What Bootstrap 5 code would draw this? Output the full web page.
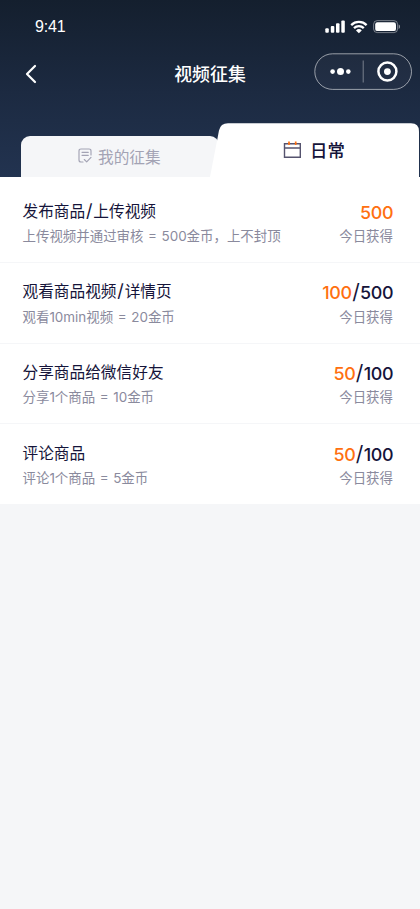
<!DOCTYPE html>
<html lang="zh-CN">
<head>
<meta charset="utf-8">
<meta name="viewport" content="width=device-width, initial-scale=1">
<title>视频征集</title>
<link href="https://cdn.jsdelivr.net/npm/bootstrap@5.3.0/dist/css/bootstrap.min.css" rel="stylesheet">
<style>
body{background:#f5f6f8;color:#15143a;font-family:Inter,"Noto Sans CJK SC",sans-serif;line-height:1}
.hero{height:177px;background:linear-gradient(#141f2e,#1c2a41 52%,#223350)}
.statusbar{height:52px;padding:1px 20px 0 35px}
.clock{font:400 16px/1 "Liberation Sans",Arial,sans-serif;letter-spacing:-.2px}
.titlebar{height:44px;display:grid;grid-template-columns:1fr auto 1fr;padding:0 8px}
.back{margin-left:16px}
.page-title{font-size:17.92px;font-weight:500;line-height:24px;padding-top:2px}
.capsule{width:98px;height:37px;margin-top:-5px}
.tabs{height:81px;padding-left:21px}
.tab-mine{width:198px;height:41px;background:#f5f6f8;border-radius:9px 9px 0 0;color:#a3a3b4;font-size:15.68px;padding:2px 0 0 57px;gap:6px}
.tab-daily{width:209px;height:54px;margin-left:-9px;color:#15143a;font-size:17.4px;font-weight:500;padding-left:73px;gap:8px}
.tab-daily>*{position:relative}
.tab-daily>span{padding-top:2px}
.tab-daily>.tab-shape{position:absolute;left:0;top:0}
.task{height:80px;padding:17px 27px 0 22.5px;border-bottom:1px solid #f5f6f8}
.task:first-child{height:86px;padding-top:23px}
.task:nth-child(2){height:81px;padding-top:17px}
.task:nth-child(2) .hint{margin-top:3px}
.task:last-child{border:0;padding-top:18px}
.task-title{font-size:15.68px;line-height:24px}
.slash{font-size:18px;line-height:1;padding:0 .8px}
.hint{font-size:13.44px;line-height:20px;color:#8a8a9d;margin-top:2px;white-space:nowrap;word-spacing:.8px}
.score{font-size:17.92px;font-weight:500;line-height:24px;padding-top:1px;margin-bottom:-1px;letter-spacing:-.3px;margin-right:-.3px}
.score-slash{font-size:21px;line-height:1;font-weight:400;padding:0 .6px 0 .3px}
.earned{color:#ff7010}
</style>
<script src="https://cdn.jsdelivr.net/npm/bootstrap@5.3.0/dist/js/bootstrap.bundle.min.js" defer></script>
</head>
<body>
<header class="hero text-white d-flex flex-column">
  <div class="statusbar d-flex align-items-center justify-content-between">
    <span class="clock">9:41</span>
    <svg width="76" height="16" viewBox="324 18 76 16" fill="#fff">
      <rect x="325.3" y="27.2" width="3.5" height="4.6" rx="1"/><rect x="330.8" y="25" width="3.5" height="6.8" rx="1"/><rect x="336" y="22.3" width="3.5" height="9.5" rx="1"/><rect x="341.3" y="19.6" width="3.5" height="12.2" rx="1"/>
      <g fill="none" stroke="#fff" stroke-width="2.3"><path d="M351.2 24.1a11 11 0 0 1 15.4 0M354 27.1a7 7 0 0 1 9.8 0"/></g>
      <path d="M356 29.5a4.2 4.2 0 0 1 5.8 0l-2.9 2.7z"/>
      <rect x="373.6" y="19.6" width="24" height="12" rx="3.7" fill="none" stroke="#fff" stroke-opacity=".42"/>
      <rect x="375.2" y="21.3" width="20.8" height="8.8" rx="2.2"/>
      <path d="M398.7 23.5q1.4.7 1.4 2.2t-1.4 2.2z" opacity=".5"/>
    </svg>
  </div>
  <div class="titlebar align-items-center">
    <svg class="back" width="14" height="20" viewBox="0 0 14 20" fill="none" stroke="#fff" stroke-width="2.2" stroke-linecap="round" stroke-linejoin="round"><path d="M11 2 3 10l8 8"/></svg>
    <h1 class="page-title mb-0">视频征集</h1>
    <svg class="capsule ms-auto" viewBox="0 0 98 37">
      <rect x=".8" y=".8" width="96.7" height="35.6" rx="17.8" fill="#fff" fill-opacity=".03" stroke="#fff" stroke-opacity=".55"/>
      <g fill="#fff"><circle cx="18.6" cy="18.6" r="2.3"/><circle cx="26.5" cy="18.6" r="3.5"/><circle cx="34.3" cy="18.6" r="2.3"/><circle cx="73.4" cy="18.6" r="3.4"/></g>
      <path d="M49.2 7.5v22" stroke="#fff" stroke-opacity=".4"/>
      <circle cx="73.4" cy="18.6" r="9" fill="none" stroke="#fff" stroke-width="2.5"/>
    </svg>
  </div>
  <nav class="tabs d-flex align-items-end">
    <div class="tab-mine d-flex align-items-center flex-shrink-0">
      <svg width="14" height="15" viewBox="0 0 14 15" fill="none" stroke="#a3a3b4" stroke-width="1.15" stroke-linecap="round" stroke-linejoin="round" class="mb-1"><path d="M13 7V3Q13 1 11 1H3Q1 1 1 3v9q0 2 2 2h2M4 4.3h6.3M4 7.3h6.3M6.3 11.5l2.4 2.3L13 9.3"/></svg>
      <span>我的征集</span>
    </div>
    <div class="tab-daily d-flex position-relative align-items-center flex-shrink-0 text-nowrap">
      <svg class="tab-shape" width="209" height="54" viewBox="0 0 209 54" fill="#fff"><path d="M0 54 9 7.5Q10.5.3 18 .3h183q8 0 8 8V54z"/></svg>
      <svg width="19" height="18" viewBox="0 0 19 18" fill="none"><path d="M1.5 2.8h15.8v13.4H1.5zM1.5 7h15.8" stroke="#55536e" stroke-width="1.4"/><path d="M6 .4v3.7M12.7.4v3.7" stroke="#ff7010" stroke-width="1.7"/></svg>
      <span>日常</span>
    </div>
  </nav>
</header>
<main class="bg-white">
  <section class="task d-flex align-items-start justify-content-between">
    <div><div class="task-title">发布商品<span class="slash">/</span>上传视频</div><div class="hint">上传视频并通过审核 = 500金币，上不封顶</div></div>
    <div class="text-end"><div class="score"><span class="earned">500</span></div><div class="hint">今日获得</div></div>
  </section>
  <section class="task d-flex align-items-start justify-content-between">
    <div><div class="task-title">观看商品视频<span class="slash">/</span>详情页</div><div class="hint">观看10min视频 = 20金币</div></div>
    <div class="text-end"><div class="score"><span class="earned">100</span><span class="score-slash">/</span>500</div><div class="hint">今日获得</div></div>
  </section>
  <section class="task d-flex align-items-start justify-content-between">
    <div><div class="task-title">分享商品给微信好友</div><div class="hint">分享1个商品 = 10金币</div></div>
    <div class="text-end"><div class="score"><span class="earned">50</span><span class="score-slash">/</span>100</div><div class="hint">今日获得</div></div>
  </section>
  <section class="task d-flex align-items-start justify-content-between">
    <div><div class="task-title">评论商品</div><div class="hint">评论1个商品 = 5金币</div></div>
    <div class="text-end"><div class="score"><span class="earned">50</span><span class="score-slash">/</span>100</div><div class="hint">今日获得</div></div>
  </section>
</main>
</body>
</html>
